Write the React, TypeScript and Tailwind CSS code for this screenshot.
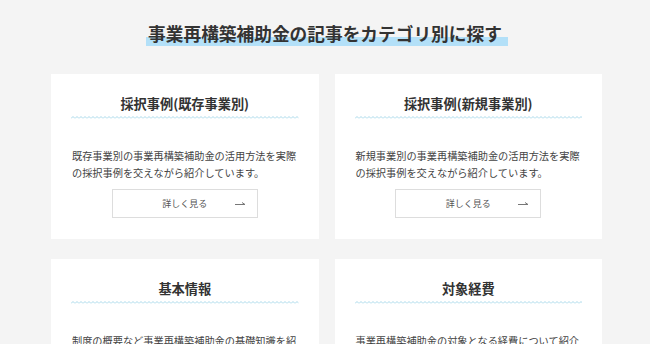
import React from "react";

const cards = [
  {
    title: "採択事例(既存事業別)",
    desc: "既存事業別の事業再構築補助金の活用方法を実際の採択事例を交えながら紹介しています。",
  },
  {
    title: "採択事例(新規事業別)",
    desc: "新規事業別の事業再構築補助金の活用方法を実際の採択事例を交えながら紹介しています。",
  },
  {
    title: "基本情報",
    desc: "制度の概要など事業再構築補助金の基礎知識を紹介しています。",
  },
  {
    title: "対象経費",
    desc: "事業再構築補助金の対象となる経費について紹介しています。",
  },
];

function Wave({ id }: { id: string }) {
  return (
    <svg className="block w-full h-[3px]" height="3" preserveAspectRatio="none">
      <defs>
        <pattern id={id} width="4" height="3" patternUnits="userSpaceOnUse">
          <polyline points="0,2.5 2,0.5 4,2.5" fill="none" stroke="#a9d9ea" strokeWidth="1" />
        </pattern>
      </defs>
      <rect width="100%" height="3" fill={`url(#${id})`} />
    </svg>
  );
}

function Card({ title, desc, idx }: { title: string; desc: string; idx: number }) {
  return (
    <div className="bg-white h-[165px] px-[20px] pt-[20px] pb-[21px] flex flex-col">
      <h3 className="text-center text-[13.2px] leading-[20px] font-bold text-[#333]">{title}</h3>
      <div className="mt-[2px]">
        <Wave id={`wave-${idx}`} />
      </div>
      <p className="mt-[28px] text-[10.2px] leading-[17px] text-[#444] pl-[1px]">{desc}</p>
      <div className="mt-[8px] mx-auto w-[146px] h-[29px] border border-[#dddddd] bg-white grid grid-cols-[1fr_auto_1fr] items-center">
        <span />
        <span className="text-[9px] text-[#555] leading-none">詳しく見る</span>
        <span className="flex justify-end pr-[11px]">
          <svg width="11" height="5" viewBox="0 0 11 5">
            <line x1="0" y1="3.5" x2="10" y2="3.5" stroke="#777" strokeWidth="1" />
            <line x1="7" y1="1.5" x2="10" y2="3.5" stroke="#777" strokeWidth="1" />
          </svg>
        </span>
      </div>
    </div>
  );
}

export default function App() {
  return (
    <div
      className="min-h-screen bg-[#f4f4f4] pt-[20px]"
      style={{ fontFamily: '"Noto Sans CJK JP", "Noto Sans", sans-serif' }}
    >
      <div className="flex justify-center">
        <h2 className="ml-[4px] text-[17.7px] leading-[26px] font-bold text-[#333] pl-[2px] pr-[6px] bg-[linear-gradient(transparent_65%,#b3e0f8_65%)]">
          事業再構築補助金の記事をカテゴリ別に探す
        </h2>
      </div>
      <div className="mt-[28px] ml-[51px] w-[551px] grid grid-cols-2 gap-x-[16px] gap-y-[20px]">
        {cards.map((c, i) => (
          <Card key={i} idx={i} title={c.title} desc={c.desc} />
        ))}
      </div>
    </div>
  );
}
